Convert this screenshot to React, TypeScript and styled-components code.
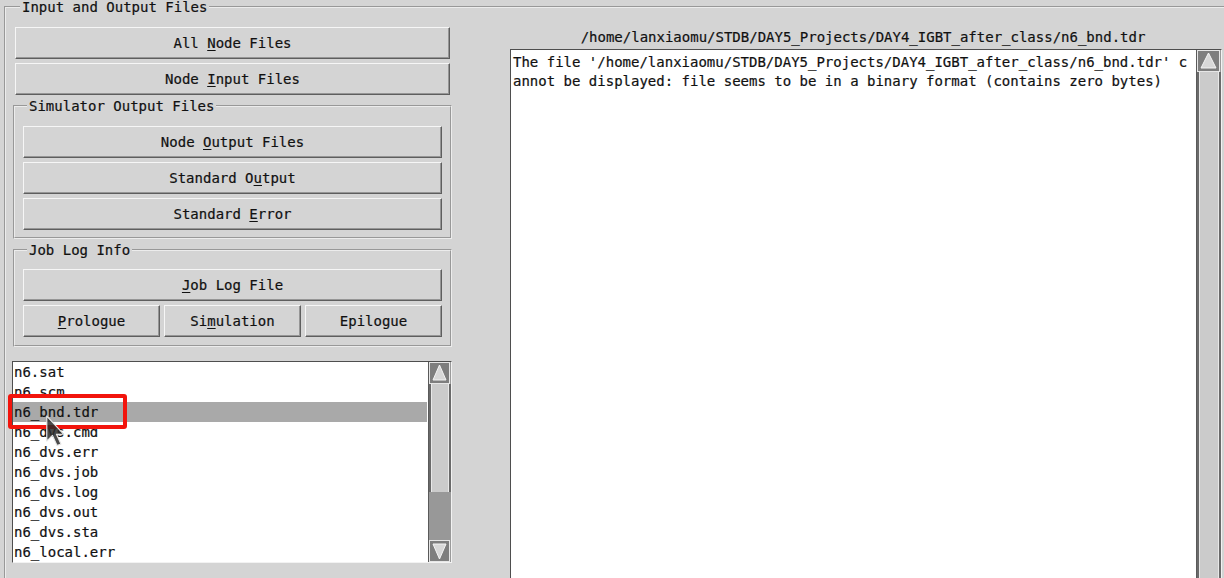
import { createGlobalStyle, styled } from "styled-components";
import { ReactElement, ReactNode } from "react";

const Global = createGlobalStyle`
  html, body {
    margin: 0;
    padding: 0;
    background: #d4d4d4;
    overflow: hidden;
  }
  body {
    font-family: "DejaVu Sans Mono", "Liberation Mono", monospace;
    font-size: 14px;
    color: #111;
    -webkit-text-stroke: 0.2px #111;
  }
`;

const Page = styled.div`
  width: 1224px;
  height: 578px;
  overflow: hidden;
  background: #d4d4d4;
`;

const Group = styled.fieldset<{ $inset: number; $top: number; $bottom: number }>`
  margin: 0;
  min-width: 0;
  border: 2px groove #ececec;
  padding: ${(p) => p.$top}px ${(p) => p.$inset}px ${(p) => p.$bottom}px ${(p) => p.$inset}px;
`;

const OuterGroup = styled(Group)`
  margin: -1px 0 0 4px;
  width: 1260px;
  height: 640px;
  box-sizing: border-box;
`;

const SubGroup = styled(Group)`
  margin: 3px 0 0 1px;
`;

const Legend = styled.legend<{ $shift: number }>`
  margin-left: ${(p) => p.$shift}px;
  padding: 0 2px;
  line-height: 16px;
  font-size: 14px;
  color: #111;
`;

const Columns = styled.div`
  display: flex;
  gap: 58px;
`;

const LeftColumn = styled.div`
  width: 440px;
  display: flex;
  flex-direction: column;
`;

const RightColumn = styled.div`
  width: 712px;
  display: flex;
  flex-direction: column;
`;

const Stack = styled.div`
  display: flex;
  flex-direction: column;
  gap: 4px;
`;

const ButtonRow = styled.div`
  display: grid;
  grid-template-columns: repeat(3, 1fr);
  gap: 4px;
`;

const Button = styled.button<{ $outer?: boolean }>`
  height: 32px;
  margin: ${(p) => (p.$outer ? "0 2px 0 3px" : "0")};
  padding: 0;
  background: #d4d4d4;
  border: 1px solid;
  border-color: #f6f6f6 #5e5e5e #5e5e5e #f6f6f6;
  box-shadow: inset -1px -1px 0 #969696;
  font-family: "DejaVu Sans Mono", "Liberation Mono", monospace;
  font-size: 14px;
  color: #111;
  -webkit-text-stroke: 0.2px #111;
  cursor: default;

  u {
    text-underline-offset: 2px;
  }
`;

const ListWrap = styled.div`
  position: relative;
  margin-top: 14px;
`;

const ListBox = styled.div`
  display: flex;
  height: 200px;
  background: #fff;
  border: 1px solid;
  border-color: #4e4e4e #f2f2f2 #f2f2f2 #4e4e4e;
`;

const Items = styled.div`
  flex: 1;
  overflow: hidden;
  margin-right: 1px;
`;

const Item = styled.div<{ $selected?: boolean }>`
  height: 20px;
  line-height: 20px;
  padding-left: 1px;
  white-space: pre;
  background: ${(p) => (p.$selected ? "#a9a9a9" : "transparent")};
`;

const Scroll = styled.div<{ $w: number }>`
  width: ${(p) => p.$w}px;
  display: flex;
  flex-direction: column;
  background: #9a9a9a;
  border-left: 1px solid #5a5a5a;
`;

const ArrowCell = styled.div`
  height: 22px;
  flex: none;
  line-height: 0;
`;

const Thumb = styled.div<{ $h?: number }>`
  flex: ${(p) => (p.$h ? `0 0 ${p.$h}px` : "1")};
  background: #cbcbcb;
  border-left: 2px solid #6a6a6a;
  border-right: 2px solid #6a6a6a;
  box-shadow: inset 1px 0 0 #e8e8e8, inset -1px 0 0 #e8e8e8;
`;

const Trough = styled.div`
  flex: 1;
  background: #989898;
`;

const Marker = styled.div`
  position: absolute;
  left: -4px;
  top: 33px;
  width: 111px;
  height: 27px;
  border: 4px solid #f2140c;
  border-radius: 3px;
  pointer-events: none;
`;

const Pointer = styled.svg`
  position: absolute;
  left: 33px;
  top: 54px;
  pointer-events: none;
`;

const PathLabel = styled.div`
  margin-top: 2px;
  padding-right: 6px;
  line-height: 16px;
  text-align: center;
  white-space: pre;
`;

const Viewer = styled.div`
  margin-top: 4px;
  height: 560px;
  display: flex;
  background: #fff;
  border: 1px solid;
  border-color: #4e4e4e #f2f2f2 #f2f2f2 #4e4e4e;
`;

const ViewerText = styled.div`
  flex: 1;
  overflow: hidden;
  padding: 3px 0 0 2px;
  line-height: 19px;
  white-space: pre;
`;

function Arrow({ down, w }: { down?: boolean; w: number }): ReactElement {
  const pts = down
    ? `${w / 2},19 4,4 ${w - 4},4`
    : `${w / 2},3 4,18 ${w - 4},18`;
  return (
    <svg width={w} height={22} viewBox={`0 0 ${w} 22`}>
      <rect x="0" y="0" width={w} height="22" fill="#7e7e7e" />
      <rect x="0.5" y="0.5" width={w - 1} height="21" fill="none" stroke="#e6e6e6" />
      <polygon points={pts} fill="#d8d8d8" stroke="#f4f4f4" strokeWidth="1" />
    </svg>
  );
}

function ScrollBar(props: { w: number; thumb?: number; down?: boolean }): ReactElement {
  return (
    <Scroll $w={props.w}>
      <ArrowCell>
        <Arrow w={props.w - 1} />
      </ArrowCell>
      <Thumb $h={props.thumb} />
      {props.thumb ? <Trough /> : null}
      {props.down ? (
        <ArrowCell>
          <Arrow w={props.w - 1} down />
        </ArrowCell>
      ) : null}
    </Scroll>
  );
}

function Btn({ children, outer }: { children: ReactNode; outer?: boolean }): ReactElement {
  return <Button $outer={outer}>{children}</Button>;
}

const files = [
  "n6.sat",
  "n6.scm",
  "n6_bnd.tdr",
  "n6_dvs.cmd",
  "n6_dvs.err",
  "n6_dvs.job",
  "n6_dvs.log",
  "n6_dvs.out",
  "n6_dvs.sta",
  "n6_local.err",
];

const path = "/home/lanxiaomu/STDB/DAY5_Projects/DAY4_IGBT_after_class/n6_bnd.tdr";

export default function App(): ReactElement {
  return (
    <Page>
      <Global />
      <OuterGroup $inset={6} $top={12} $bottom={0}>
        <Legend $shift={8}>Input and Output Files</Legend>
        <Columns>
          <LeftColumn>
            <Stack>
              <Btn outer>
                All <u>N</u>ode Files
              </Btn>
              <Btn outer>
                Node <u>I</u>nput Files
              </Btn>
            </Stack>

            <SubGroup $inset={8} $top={12} $bottom={7}>
              <Legend $shift={4}>Simulator Output Files</Legend>
              <Stack>
                <Btn>
                  Node <u>O</u>utput Files
                </Btn>
                <Btn>
                  Standard O<u>u</u>tput
                </Btn>
                <Btn>
                  Standard <u>E</u>rror
                </Btn>
              </Stack>
            </SubGroup>

            <SubGroup $inset={8} $top={11} $bottom={8}>
              <Legend $shift={4}>Job Log Info</Legend>
              <Stack>
                <Btn>
                  <u>J</u>ob Log File
                </Btn>
                <ButtonRow>
                  <Btn>
                    <u>P</u>rologue
                  </Btn>
                  <Btn>
                    Si<u>m</u>ulation
                  </Btn>
                  <Btn>Epilogue</Btn>
                </ButtonRow>
              </Stack>
            </SubGroup>

            <ListWrap>
              <ListBox>
                <Items>
                  {files.map((f) => (
                    <Item key={f} $selected={f === "n6_bnd.tdr"}>
                      {f}
                    </Item>
                  ))}
                </Items>
                <ScrollBar w={22} thumb={108} down />
              </ListBox>
              <Marker />
              <Pointer width="24" height="34" viewBox="0 0 20 30">
                <path
                  d="M1 1 L1 23 L6 18 L10 27 L13.5 25.5 L9.5 17 L16 17 Z"
                  fill="#2a2a2a"
                  fillOpacity="0.85"
                  stroke="#e8e8e8"
                  strokeWidth="1"
                  strokeLinejoin="round"
                />
              </Pointer>
            </ListWrap>
          </LeftColumn>

          <RightColumn>
            <PathLabel>{path}</PathLabel>
            <Viewer>
              <ViewerText>
                {`The file '${path}' c\nannot be displayed: file seems to be in a binary format (contains zero bytes)`}
              </ViewerText>
              <ScrollBar w={24} down />
            </Viewer>
          </RightColumn>
        </Columns>
      </OuterGroup>
    </Page>
  );
}
